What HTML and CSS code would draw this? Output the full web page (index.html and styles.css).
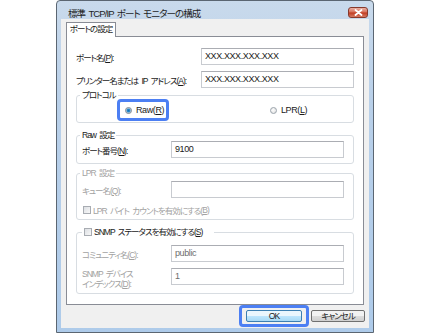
FILE: index.html
```html
<!DOCTYPE html>
<html lang="ja">
<head>
  <meta charset="UTF-8" />
  <title>標準 TCP/IP ポート モニターの構成</title>
  <link rel="stylesheet" href="styles.css">
</head>
<body>
  <div class="window">
    <div class="titlebar">
      <span class="title">標準 TCP/IP ポート モニターの構成</span>
      <span class="close">
        <svg width="9" height="7" viewBox="0 0 9 7"><path d="M1.5 1 L7.5 6 M7.5 1 L1.5 6" stroke="#fff" stroke-width="1.8" stroke-linecap="round"/></svg>
      </span>
    </div>

    <div class="client">
      <div class="tabs"><div class="tab">ポートの設定</div></div>

      <div class="panel">
        <div class="row wide">
          <span class="label">ポート名(<u>P</u>):</span>
          <span class="field">XXX.XXX.XXX.XXX</span>
        </div>
        <div class="row wide second">
          <span class="label">プリンター名または IP アドレス(<u>A</u>):</span>
          <span class="field">XXX.XXX.XXX.XXX</span>
        </div>

        <fieldset class="group protocol">
          <legend>プロトコル</legend>
          <div class="radios">
            <span class="mark raw"><span class="radio on"></span>Raw(<u>R</u>)</span>
            <span class="lpr"><span class="radio"></span>LPR(<u>L</u>)</span>
          </div>
        </fieldset>

        <fieldset class="group raw-set">
          <legend>Raw 設定</legend>
          <div class="row">
            <span class="label">ポート番号(<u>N</u>):</span>
            <span class="field">9100</span>
          </div>
        </fieldset>

        <fieldset class="group lpr-set">
          <legend class="off">LPR 設定</legend>
          <div class="row">
            <span class="label off">キュー名(<u>Q</u>):</span>
            <span class="field"></span>
          </div>
          <div class="check-row off"><span class="box"></span>LPR バイト カウントを有効にする(<u>B</u>)</div>
        </fieldset>

        <fieldset class="group snmp">
          <legend><span class="box"></span>SNMP ステータスを有効にする(<u>S</u>)</legend>
          <div class="row">
            <span class="label off">コミュニティ名(<u>C</u>):</span>
            <span class="field dim">public</span>
          </div>
          <div class="row next">
            <span class="label off two">SNMP デバイス<br>インデックス(<u>D</u>):</span>
            <span class="field dim">1</span>
          </div>
        </fieldset>
      </div>

      <div class="buttons">
        <span class="mark ok-mark"><button class="btn ok">OK</button></span>
        <button class="btn">キャンセル</button>
      </div>
    </div>
  </div>
</body>
</html>
```

FILE: styles.css
```css
body {
  margin: 0;
  background: #fff;
  font-family: "Liberation Sans", "Noto Sans CJK JP", sans-serif;
  font-size: 8.5px;
  letter-spacing: -1px;
  word-spacing: 2px;
  font-feature-settings: "palt";
  color: #1a1a1a;
  white-space: nowrap;
}

.window {
  margin-left: 56px;
  width: 318px;
  height: 333px;
  box-sizing: border-box;
  border: 1px solid #5b6672;
  border-radius: 4px 4px 0 0;
  background: linear-gradient(to bottom, #c9daec, #b9d0e9 30%, #aecbea);
  padding: 0 4px 4px 4px;
  display: flex;
  flex-direction: column;
}

.titlebar {
  height: 18px;
  display: flex;
  justify-content: space-between;
  align-items: flex-start;
}

.title {
  padding: 6px 0 0 7px;
  line-height: 13px;
  font-size: 9.5px;
  letter-spacing: -0.9px;
  word-spacing: 1.5px;
  color: #1e1e1e;
}

.close {
  margin-top: 6px;
  margin-right: 1px;
  width: 20px;
  height: 11px;
  box-sizing: border-box;
  border: 1px solid #86392c;
  border-radius: 3px;
  background: linear-gradient(to bottom, #eab1a4, #d66d57 48%, #c0391f 52%, #d67a63);
  display: flex;
  align-items: center;
  justify-content: center;
}

.client {
  flex: 1;
  background: #f0f0f0;
  padding: 3px 4px 0 5px;
  display: flex;
  flex-direction: column;
}

.tabs {
  display: flex;
  position: relative;
  z-index: 1;
  margin-bottom: -1px;
}

.tab {
  width: 50px;
  height: 15px;
  box-sizing: border-box;
  border: 1px solid #898c95;
  border-bottom: none;
  background: #fff;
  line-height: 13px;
  text-align: center;
}

.panel {
  width: 298px;
  box-sizing: border-box;
  border: 1px solid #898c95;
  background: #fff;
  padding: 11px 9px 10px 9px;
}

.row {
  display: flex;
  height: 17px;
  align-items: center;
}

.row.wide .label {
  width: 125px;
}

.row.second {
  margin-top: 6px;
}

.label {
  width: 89px;
  flex-shrink: 0;
}

.field {
  flex: 1;
  height: 17px;
  box-sizing: border-box;
  border: 1px solid #c8cbd0;
  border-top-color: #abadb3;
  background: #fff;
  padding-left: 3px;
  line-height: 15px;
  font-size: 9px;
  letter-spacing: -0.4px;
}

.field.dim {
  color: #6d6d6d;
}

.off {
  color: #a2a2a2;
}

.group {
  margin: 0;
  border: 1px solid #d8dde2;
  border-radius: 3px;
  padding: 0 9px 0 5px;
}

.group legend {
  padding: 0 2px;
  margin-left: -2px;
  line-height: 13px;
}

.protocol {
  margin-top: 1px;
  padding-bottom: 1px;
}

.radios {
  display: flex;
  align-items: center;
  height: 22px;
  margin-top: -3px;
  font-size: 9px;
  letter-spacing: -0.4px;
}

.mark {
  border: 3px solid #4c7ff3;
  border-radius: 4px;
  box-sizing: border-box;
}

.raw {
  margin-left: 35px;
  width: 52px;
  height: 22px;
  display: flex;
  align-items: center;
  padding-left: 5px;
}

.lpr {
  margin-left: 101px;
  display: flex;
  align-items: center;
}

.radio {
  width: 7px;
  height: 7px;
  box-sizing: border-box;
  border-radius: 50%;
  border: 1px solid #9aa3ab;
  background: radial-gradient(circle at 40% 40%, #fdfdfd, #dcdcdc);
  margin-right: 4px;
}

.radio.on {
  border-color: #7d8894;
  background: radial-gradient(circle, #0e6fb2 0, #2d8ecf 1.5px, #d2dde6 2.5px, #f3f5f7);
}

.raw-set {
  margin-top: 6px;
  padding-bottom: 5px;
}

.raw-set .row {
  margin-top: -1px;
}

.lpr-set {
  margin-top: 3px;
  padding-bottom: 3px;
}

.lpr-set .row {
  margin-top: 1px;
}

.check-row {
  margin-top: 5px;
  height: 13px;
  display: flex;
  align-items: center;
  padding-left: 1px;
}

.box {
  display: inline-block;
  width: 8px;
  height: 8px;
  box-sizing: border-box;
  border: 1px solid #a8acb2;
  background: linear-gradient(135deg, #dcdfe3, #f8f8f8);
  margin-right: 2px;
  vertical-align: -1px;
}

.snmp {
  margin-top: 6px;
  padding-bottom: 8px;
}

.snmp legend {
  margin-left: 0;
  padding-right: 12px;
}

.snmp .row {
  margin-top: 6px;
}

.label.two {
  line-height: 10px;
  padding-top: 4px;
}

.buttons {
  display: flex;
  justify-content: flex-end;
  align-items: center;
  gap: 2px;
}

.ok-mark {
  padding: 2px 4px;
  height: 22px;
  display: flex;
  align-items: center;
}

.btn {
  width: 54px;
  height: 12px;
  box-sizing: border-box;
  border: 1px solid #707070;
  border-radius: 2px;
  background: linear-gradient(to bottom, #f2f2f2 50%, #dddddd 50%, #cfcfcf);
  font: inherit;
  letter-spacing: inherit;
  font-feature-settings: inherit;
  line-height: 10px;
  padding: 0;
  color: #1a1a1a;
}

.btn.ok {
  width: 56px;
  border-color: #3c7fb1;
  background: linear-gradient(to bottom, #eaf6fd 50%, #bee6fd 50%, #a7d9f5);
}
```
